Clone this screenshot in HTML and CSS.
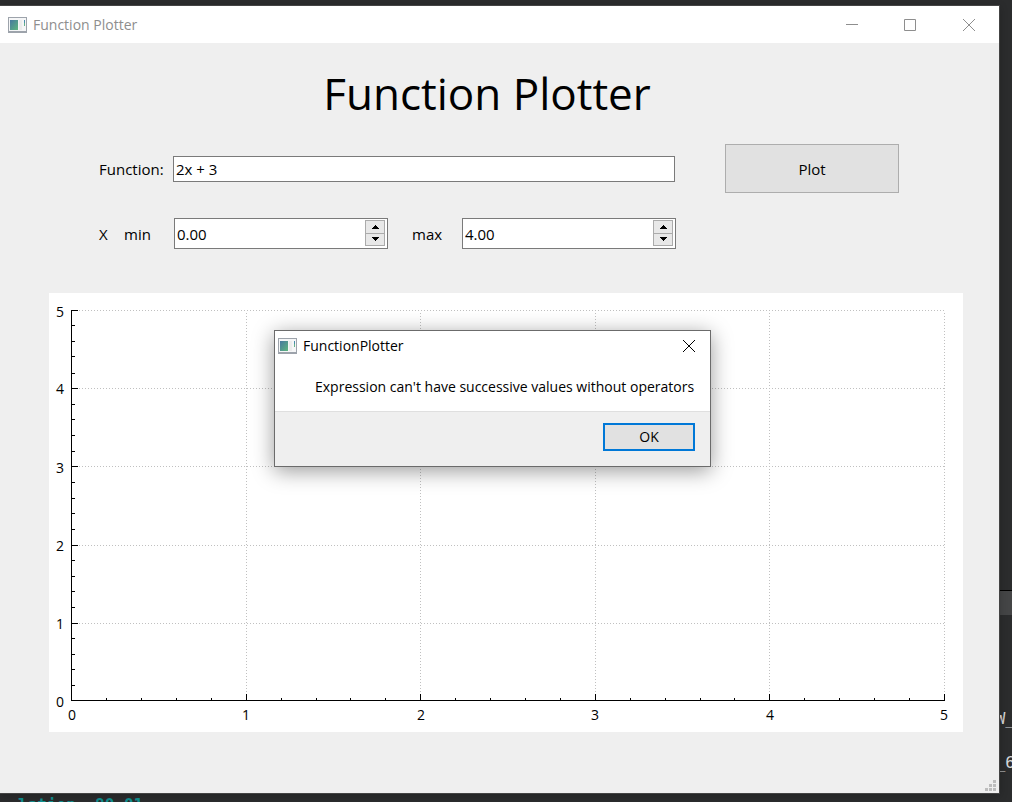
FILE: index.html
```
<!DOCTYPE html>
<html lang="en">
<head>
<meta charset="utf-8">
<title>Function Plotter</title>
<link rel="stylesheet" href="styles.css">
</head>
<body>
<div class="editor" aria-hidden="true">
  <span class="editor-row"></span>
  <span class="code code-a">W_</span>
  <span class="code code-b">_6</span>
  <span class="code code-c">lation: 80 01</span>
</div>
<main class="window">
  <header class="titlebar">
    <svg class="app-icon" width="19" height="16" viewBox="0 0 19 16"><use href="#app"/></svg>
    <span class="title">Function Plotter</span>
    <div class="controls">
      <button type="button" aria-label="Minimize"><svg width="12" height="12" viewBox="0 0 12 12"><path d="M0 5.5h12"/></svg></button>
      <button type="button" aria-label="Maximize"><svg width="12" height="12" viewBox="0 0 12 12"><path d="M.5 .5h11v11H.5z"/></svg></button>
      <button type="button" aria-label="Close"><svg width="12" height="12" viewBox="0 0 12 12"><path d="M0 0l12 12M12 0L0 12"/></svg></button>
    </div>
  </header>
  <section class="content">
    <h1>Function Plotter</h1>
    <form class="form">
      <div class="fields">
        <div class="row">
          <label class="lead" for="fn">Function:</label>
          <input class="text" id="fn" type="text" value="2x + 3">
        </div>
        <div class="row range">
          <div class="lead"><span class="axis">X</span><label for="min">min</label></div>
          <div class="spin">
            <input id="min" type="text" value="0.00">
            <div class="steps">
              <button type="button" aria-label="Increase min"><svg width="7" height="4" viewBox="0 0 7 4"><path d="M3 0h1v1h1v1h1v1h1v1H0V3h1V2h1V1h1z"/></svg></button>
              <button type="button" aria-label="Decrease min"><svg width="7" height="4" viewBox="0 0 7 4"><path d="M3 4h1V3h1V2h1V1h1V0H0v1h1v1h1v1h1z"/></svg></button>
            </div>
          </div>
          <label class="max" for="max">max</label>
          <div class="spin">
            <input id="max" type="text" value="4.00">
            <div class="steps">
              <button type="button" aria-label="Increase max"><svg width="7" height="4" viewBox="0 0 7 4"><path d="M3 0h1v1h1v1h1v1h1v1H0V3h1V2h1V1h1z"/></svg></button>
              <button type="button" aria-label="Decrease max"><svg width="7" height="4" viewBox="0 0 7 4"><path d="M3 4h1V3h1V2h1V1h1V0H0v1h1v1h1v1h1z"/></svg></button>
            </div>
          </div>
        </div>
      </div>
      <button class="plot" type="button">Plot</button>
    </form>
    <svg class="chart" viewBox="0 0 914 439" role="img" aria-label="Empty plot, both axes from 0 to 5">
      <path class="grid" d="M30 17.500H896M30 95.500H896M30 173.500H896M30 252.500H896M30 330.500H896M197.500 20V400M371.500 20V400M546.500 20V400M720.500 20V400M895.500 20V400"/>
      <path class="ticks" d="M22.500 17V408M22 407.500H896
        M22 17.500h7M22 95.500h7M22 173.500h7M22 252.500h7M22 330.500h7
        M22 32.500h4M22 48.500h4M22 63.500h4M22 80.500h4
        M22 111.500h4M22 126.500h4M22 142.500h4M22 158.500h4
        M22 189.500h4M22 205.500h4M22 220.500h4M22 236.500h4
        M22 267.500h4M22 283.500h4M22 298.500h4M22 314.500h4
        M22 345.500h4M22 361.500h4M22 376.500h4M22 392.500h4
        M197.500 408v-7M371.500 408v-7M546.500 408v-7M720.500 408v-7M895.500 408v-7
        M57.500 408v-3M92.500 408v-3M127.500 408v-3M162.500 408v-3
        M232.500 408v-3M267.500 408v-3M301.500 408v-3M336.500 408v-3
        M406.500 408v-3M441.500 408v-3M476.500 408v-3M511.500 408v-3
        M581.500 408v-3M616.500 408v-3M651.500 408v-3M685.500 408v-3
        M755.500 408v-3M790.500 408v-3M825.500 408v-3M860.500 408v-3"/>
      <g class="ylabels"><text x="15" y="24">5</text><text x="15" y="101">4</text><text x="15" y="180">3</text><text x="15" y="258">2</text><text x="15" y="336">1</text><text x="15" y="414">0</text></g>
      <g class="xlabels"><text x="23" y="427">0</text><text x="197" y="427">1</text><text x="372" y="427">2</text><text x="546" y="427">3</text><text x="721" y="427">4</text><text x="895" y="427">5</text></g>
    </svg>
  </section>
  <svg class="grip" width="11" height="11" viewBox="0 0 11 11"><path d="M8 0h3v3H8zM4 4h3v3H4zM8 4h3v3H8zM0 8h3v3H0zM4 8h3v3H4zM8 8h3v3H8z"/></svg>
  <div class="dialog" role="dialog" aria-labelledby="dlg-title">
    <div class="dialog-bar">
      <svg class="app-icon" width="19" height="16" viewBox="0 0 19 16"><g id="app"><path fill="#9da3ab" d="M0 0h19v16H0z"/><path fill="#f5f6f7" d="M1 1h17v13H1z"/><path fill="url(#screen)" d="M2 3h8v10H2z"/><path fill="#ececec" d="M11 3h3v10h-3z"/><path fill="#4b8dab" d="M16 3h1v3h-1z"/><path fill="#65b18a" d="M16 6h1v3h-1z"/></g>
        <defs><linearGradient id="screen" x1="0" y1="0" x2="1" y2="1"><stop offset="0" stop-color="#4778a0"/><stop offset="1" stop-color="#5eb67e"/></linearGradient></defs></svg>
      <span class="title" id="dlg-title">FunctionPlotter</span>
      <button type="button" aria-label="Close dialog"><svg width="12" height="12" viewBox="0 0 12 12"><path d="M0 0l12 12M12 0L0 12"/></svg></button>
    </div>
    <p>Expression can't have successive values without operators</p>
    <div class="dialog-foot"><button class="ok" type="button">OK</button></div>
  </div>
</main>
</body>
</html>
```
FILE: styles.css
```
* { box-sizing: border-box; }
body {
  margin: 0;
  min-height: 100vh;
  display: flex;
  position: relative;
  overflow: hidden;
  padding: 5px 12px 8px 0;
  background: #2b2c2d;
  color: #000;
  font: 15px/20px "Open Sans", "Noto Sans", sans-serif;
}
button, input { font: inherit; color: inherit; border-radius: 0; margin: 0; }
button { padding: 0; display: flex; align-items: center; justify-content: center; }
svg { display: block; }
.editor { position: absolute; inset: 0; overflow: hidden; color: #d5d7d8; }
.editor-row { position: absolute; right: 0; top: 590px; width: 40px; height: 25px; background: #444546; border-top: 1px solid #000; }
.code { position: absolute; font: 16px/20px "DejaVu Sans Mono", monospace; white-space: pre; }
.code-a { right: -3px; top: 709px; }
.code-b { right: -3px; top: 753px; }
.code-c { left: 18px; top: 795px; color: #109090; font-weight: bold; }
.window {
  position: relative;
  flex: 1;
  display: flex;
  flex-direction: column;
  background: #efefef;
  border: 1px solid #444;
  border-left: 0;
  box-shadow: 0 2px 8px rgba(0, 0, 0, .2);
}
.titlebar { display: flex; align-items: center; height: 37px; padding-left: 8px; background: #fff; color: #8e8e8e; }
.title { font-size: 14px; margin-left: 6px; }
.controls { display: flex; margin-left: auto; }
.controls button { width: 58px; height: 36px; border: 0; background: none; }
.controls button:last-child { width: 60px; }
.controls path { fill: none; stroke: #8e8e8e; }
.content { flex: 1; padding: 16px 36px 0 49px; }
h1 { margin: 0; padding-right: 38px; text-align: center; font-size: 44px; line-height: 68px; font-weight: 400; }
.form { display: flex; align-items: flex-start; gap: 49px; margin: 17px 64px 0 50px; }
.fields { flex: 1; display: flex; flex-direction: column; gap: 36px; padding-top: 12px; }
.row { display: flex; align-items: center; }
.lead { display: flex; width: 74px; }
.axis { width: 25px; }
.text { flex: 1; min-width: 0; height: 26px; margin-right: 1px; padding: 0 2px; background: #fff; border: 1px solid #7a7a7a; }
.range .lead { width: 75px; }
.spin { flex: 1; display: flex; height: 31px; background: #fff; border: 1px solid #7a7a7a; padding: 1px 2px 2px 0; }
.spin input { flex: 1; min-width: 0; width: 0; border: 0; padding: 1px 2px 0; background: none; }
.steps { display: flex; flex-direction: column; width: 20px; border: 1px solid #ababab; background: #e8e8e8; }
.steps button { flex: 1; border: 0; background: none; }
.steps button + button { border-top: 1px solid #ababab; }
.max { width: 74px; padding-left: 24px; }
.plot { width: 174px; height: 49px; background: #e1e1e1; border: 1px solid #adadad; }
.chart { width: 100%; height: auto; margin-top: 44px; background: #fff; font-size: 14px; }
.grid { fill: none; stroke: #c0c0c0; stroke-dasharray: 1 2; }
.ticks { fill: none; stroke: #000; }
.ylabels { text-anchor: end; }
.xlabels { text-anchor: middle; }
.grip { position: absolute; right: 3px; bottom: 2px; fill: #bdbdbd; }
.dialog {
  position: absolute;
  left: 274px;
  top: 324px;
  width: 437px;
  background: #fff;
  border: 1px solid #6b6b6b;
  box-shadow: 0 4px 20px rgba(0, 0, 0, .4);
}
.dialog-bar { display: flex; align-items: center; height: 30px; padding: 0 15px 0 3px; }
.dialog-bar button { margin-left: auto; border: 0; background: none; }
.dialog-bar button path { fill: none; stroke: #000; }
.dialog p { margin: 0; padding: 16px 0 14px 40px; font-size: 14px; white-space: nowrap; }
.dialog-foot { display: flex; justify-content: flex-end; padding: 11px 15px 15px; background: #efefef; border-top: 1px solid #dfdfdf; }
.ok { width: 92px; height: 28px; font-size: 14px; background: #e1e1e1; border: 2px solid #0078d7; }
```
